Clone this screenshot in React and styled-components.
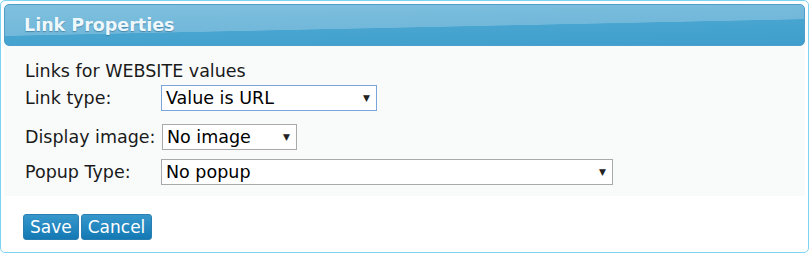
import React from 'react';
import styled, { createGlobalStyle } from 'styled-components';

const GlobalStyle = createGlobalStyle`
  html, body {
    margin: 0;
    padding: 0;
    background: #ffffff;
  }
  body {
    font-family: "DejaVu Sans", Verdana, sans-serif;
  }
`;

const Panel = styled.div`
  width: 809px;
  height: 253px;
  box-sizing: border-box;
  border: 1px solid #7dd3f3;
  border-radius: 5px;
  padding: 3px 3px 0 3px;
  display: flex;
  flex-direction: column;
  overflow: hidden;
`;

const Header = styled.div`
  flex-shrink: 0;
  height: 42px;
  box-sizing: border-box;
  border: 1px solid #4f9dcb;
  border-radius: 5px;
  padding: 0 19px;
  display: flex;
  align-items: center;
  color: #eef8fc;
  font-weight: bold;
  font-size: 17.5px;
  text-shadow: 0 1px 1px rgba(30, 90, 130, 0.5);
  background: linear-gradient(178.8deg, #7fc0de 0%, #72b8da 54%, #48a5d0 55%, #3f9ecc 100%);
`;

const Body = styled.div`
  flex-shrink: 0;
  background: #f9fbfb;
  padding: 16px 21px 9px 21px;
  font-size: 17.5px;
  color: #1a1a1a;
`;

const Caption = styled.div`
  line-height: 18px;
`;

const Table = styled.table`
  border-collapse: collapse;
  td {
    padding: 0;
  }
`;

const Row = styled.tr`
  height: ${(p) => p.h}px;
`;

const LabelCell = styled.td`
  width: 136px;
  white-space: nowrap;
  vertical-align: middle;
`;

const Select = styled.div`
  box-sizing: border-box;
  width: ${(p) => p.w}px;
  height: 26px;
  border: 1px solid ${(p) => (p.focus ? '#7ba4dc' : '#a9a9a9')};
  background: #fff;
  display: flex;
  align-items: center;
  justify-content: space-between;
  padding: 0 6px 0 4px;
  margin-left: ${(p) => p.ml || 0}px;
  font-size: 17.5px;
  color: #000;
`;

const Arrow = styled.span`
  font-size: 9px;
  color: #222;
`;

const Footer = styled.div`
  flex: 1;
  min-height: 0;
  padding: 18px 19px 0;
  display: flex;
  gap: 2px;
  align-items: flex-start;
`;

const Button = styled.button`
  height: 26px;
  padding: 0 6px;
  border: 1px solid #2a7fb2;
  border-radius: 3px;
  background: linear-gradient(#3797cb, #2286bf 55%, #1478b3);
  color: #fff;
  font-family: "DejaVu Sans", Verdana, sans-serif;
  font-size: 17px;
  line-height: 24px;
`;

const rows = [
  { label: 'Link type:', value: 'Value is URL', w: 216, focus: true, h: 36 },
  { label: 'Display image:', value: 'No image', w: 135, h: 41, ml: 1 },
  { label: 'Popup Type:', value: 'No popup', w: 452, h: 30 },
];

export default function App() {
  return (
    <>
      <GlobalStyle />
      <Panel>
        <Header>Link Properties</Header>
        <Body>
          <Caption>Links for WEBSITE values</Caption>
          <Table>
            <tbody>
              {rows.map((r) => (
                <Row key={r.label} h={r.h}>
                  <LabelCell>{r.label}</LabelCell>
                  <td>
                    <Select w={r.w} focus={r.focus} ml={r.ml}>
                      {r.value}
                      <Arrow>▼</Arrow>
                    </Select>
                  </td>
                </Row>
              ))}
            </tbody>
          </Table>
        </Body>
        <Footer>
          <Button>Save</Button>
          <Button>Cancel</Button>
        </Footer>
      </Panel>
    </>
  );
}
